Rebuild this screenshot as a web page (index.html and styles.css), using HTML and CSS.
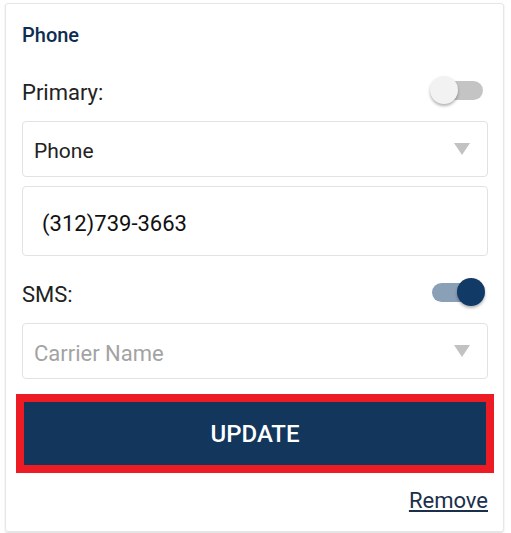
FILE: index.html
```html
<!DOCTYPE html>
<html lang="en">
<head>
    <meta charset="UTF-8">
    <meta name="viewport" content="width=device-width, initial-scale=1.0">
    <title>Phone</title>
    <link rel="stylesheet" href="styles.css">
</head>
<body>
    <div class="card">
        <h2 class="card-title">Phone</h2>

        <div class="switch-row">
            <span class="switch-label">Primary:</span>
            <div class="switch">
                <span class="switch-track"></span>
                <span class="switch-thumb"></span>
            </div>
        </div>

        <div class="select">
            <span class="select-value">Phone</span>
            <span class="select-arrow"></span>
        </div>

        <div class="input">(312)739-3663</div>

        <div class="switch-row sms-row">
            <span class="switch-label">SMS:</span>
            <div class="switch on">
                <span class="switch-track"></span>
                <span class="switch-thumb"></span>
            </div>
        </div>

        <div class="select carrier">
            <span class="select-value placeholder">Carrier Name</span>
            <span class="select-arrow"></span>
        </div>

        <button class="update-button">UPDATE</button>

        <div class="remove-row">
            <a href="#" class="remove-link">Remove</a>
        </div>
    </div>
</body>
</html>
```

FILE: styles.css
```css
body {
    margin: 0;
    padding: 3px 7px 2px 5px;
    font-family: Roboto, "Liberation Sans", sans-serif;
    background-color: #fff;
}

.card {
    border: 1px solid #e6e6e6;
    border-radius: 3px;
    box-shadow: 0 1px 2px rgba(0, 0, 0, 0.14);
    padding: 19px 15px 17px 16px;
    display: flex;
    flex-direction: column;
}

.card-title {
    margin: 0;
    font-size: 20px;
    line-height: 24px;
    font-weight: 500;
    color: #0e2d50;
}

.switch-row {
    margin-top: 28px;
    height: 30px;
    display: flex;
    align-items: center;
    justify-content: space-between;
}

.sms-row {
    margin-top: 21px;
}

.switch-label {
    font-size: 22px;
    color: #222;
    padding-top: 4px;
}

.switch {
    position: relative;
    width: 55px;
    height: 30px;
    margin-right: 3px;
}

.switch-track {
    position: absolute;
    left: 5px;
    right: 2px;
    top: 6px;
    height: 19px;
    border-radius: 10px;
    background-color: #c4c4c4;
}

.switch-thumb {
    position: absolute;
    left: 0;
    top: 1px;
    width: 28px;
    height: 28px;
    border-radius: 50%;
    background-color: #f2f2f2;
    box-shadow: 0 2px 3px rgba(0, 0, 0, 0.3);
}

.switch.on .switch-track {
    left: 2px;
    right: 10px;
    background-color: #8aa0b6;
}

.switch.on .switch-thumb {
    left: auto;
    right: 0;
    background-color: #123a66;
}

.select {
    margin-top: 16px;
    height: 56px;
    box-sizing: border-box;
    border: 1px solid #e2e2e2;
    border-radius: 4px;
    padding: 0 17px 0 11px;
    display: flex;
    align-items: center;
    justify-content: space-between;
}

.select-value {
    font-size: 21px;
    color: #222;
    padding-top: 4px;
}

.select-value.placeholder {
    font-size: 22px;
    color: #a3a3a3;
}

.select-arrow {
    width: 0;
    height: 0;
    border-left: 8px solid transparent;
    border-right: 8px solid transparent;
    border-top: 12px solid #c2c2c2;
}

.input {
    margin-top: 9px;
    height: 70px;
    box-sizing: border-box;
    border: 1px solid #e2e2e2;
    border-radius: 4px;
    padding: 4px 19px 0;
    display: flex;
    align-items: center;
    font-size: 22px;
    color: #111;
}

.update-button {
    margin: 23px 2px 0;
    height: 63px;
    border: none;
    outline: 8px solid #ed1c24;
    background-color: #12365c;
    color: #fff;
    font-family: Roboto, "Liberation Sans", sans-serif;
    font-size: 24px;
    font-weight: 500;
    cursor: pointer;
}

.remove-row {
    margin-top: 23px;
    display: flex;
    justify-content: flex-end;
    line-height: 26px;
}

.remove-link {
    font-size: 22px;
    color: #1a2f4a;
    text-decoration: underline;
}
```
